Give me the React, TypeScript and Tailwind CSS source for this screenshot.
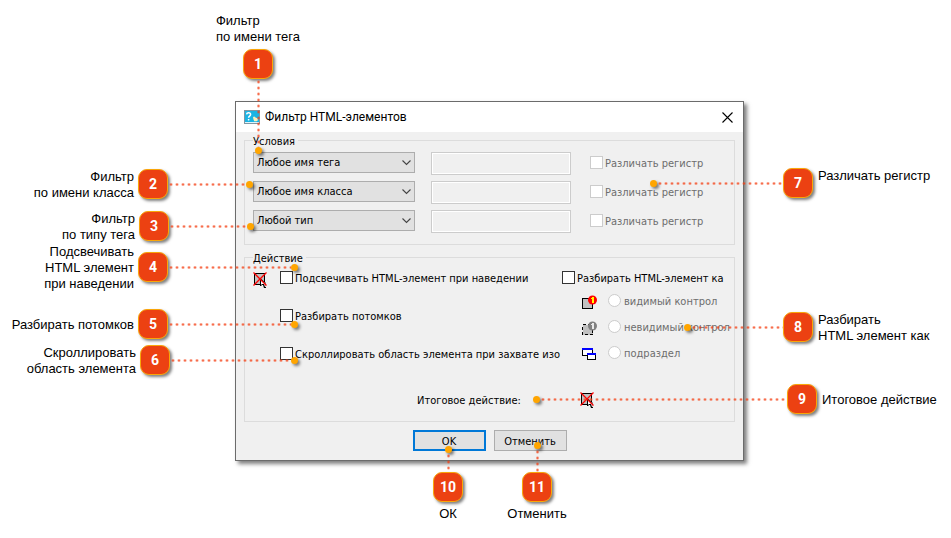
import React, { ReactNode, useId } from "react";
import { clsx } from "clsx";

const dialogFont = "font-['DejaVu_Sans_Condensed','DejaVu_Sans',sans-serif] text-[11px]";

function CrossedElementIcon() {
  return (
    <svg width="15" height="16" viewBox="0 0 15 16" className="shrink-0" aria-hidden="true">
      <rect x="1.5" y="1.5" width="10" height="11" fill="#c0c0c0" stroke="#000" shapeRendering="crispEdges" />
      <path d="M7 6v8l1 0 1-1 1 0 1 3 2 0 0-2-1-1 0-1 1-1z" fill="#000" />
      <path d="M8 8v5l1-1 2 0 1 3 1 0-1-3 0-1z" fill="#fff" />
      <path d="M.5.5l13 13M13.5.5l-13 13" stroke="#f00" strokeWidth="1.3" fill="none" />
    </svg>
  );
}

function ControlIcon({ hidden }: { hidden?: boolean }) {
  return (
    <svg width="15" height="15" viewBox="0 0 15 15" className="mt-[3px] shrink-0" aria-hidden="true">
      <rect
        x="0.5"
        y="3.5"
        width="10"
        height="10"
        fill="#c0c0c0"
        stroke="#000"
        strokeDasharray={hidden ? "3 2" : undefined}
        shapeRendering="crispEdges"
      />
      <circle cx="10.5" cy="5" r="4.5" fill={hidden ? "#808080" : "#f00"} />
      <g shapeRendering="crispEdges" fill={hidden ? "#e8e8e8" : "#ff0"}>
        <rect x="10" y="2" width="2" height="6" />
        <rect x="9" y="3" width="1" height="1" />
      </g>
    </svg>
  );
}

function WindowsIcon() {
  return (
    <svg width="15" height="15" viewBox="0 0 15 15" className="mt-[2px] shrink-0" aria-hidden="true">
      <g shapeRendering="crispEdges">
        <rect x="0.5" y="2.5" width="10" height="7" fill="#fff" stroke="#000" />
        <path d="M0 3h11" stroke="#00f" strokeWidth="2" />
        <rect x="5.5" y="7.5" width="8" height="6" fill="#fff" stroke="#000" />
        <path d="M5 8h9" stroke="#00f" strokeWidth="2" />
      </g>
    </svg>
  );
}

function AppIcon() {
  return (
    <svg width="16" height="16" viewBox="0 0 16 16" className="shrink-0" aria-hidden="true">
      <rect x="0.5" y="1.5" width="15" height="13" fill="#1bb4e4" stroke="#7f97a3" />
      <rect x="1" y="13" width="14" height="1" fill="#dff3fa" />
      <path
        d="M2.600 5.400c.2-2.200 4-2.200 4 .100 0 1.600-2 1.500-2 3.200M4.600 10v1.600"
        stroke="#fff"
        strokeWidth="1.500"
        fill="none"
      />
      <path d="M9 8l1.300-.6 1.200 1.200 2.200.8.2 1.800-1.300 1.100h-2.400l-.8-2z" fill="#fff0b8" />
    </svg>
  );
}

function Check({ label, disabled }: { label: string; disabled?: boolean }) {
  const id = useId();
  return (
    <div className="flex items-center gap-[2px]">
      <input
        id={id}
        type="checkbox"
        disabled={disabled}
        className="size-[13px] shrink-0 appearance-none border border-[#333] bg-white checked:bg-[#0078d7] disabled:border-[#ccc]"
      />
      <label
        htmlFor={id}
        className={clsx("pt-[2px] leading-[13px] whitespace-nowrap", disabled && "text-[#6d6d6d]")}
      >
        {label}
      </label>
    </div>
  );
}

function Radio({ label, icon }: { label: string; icon: ReactNode }) {
  const id = useId();
  return (
    <div className="flex h-[15px] items-center pl-5">
      {icon}
      <input
        id={id}
        type="radio"
        name="parse-as"
        disabled
        className="ml-[11px] size-[13px] shrink-0 appearance-none rounded-full border border-[#ccc] bg-white"
      />
      <label htmlFor={id} className="ml-[3px] pt-[2px] leading-[13px] whitespace-nowrap text-[#6d6d6d]">
        {label}
      </label>
    </div>
  );
}

function ConditionRow({ value }: { value: string }) {
  return (
    <div className="flex items-start">
      <div className="relative w-[162px]">
        <select
          aria-label={value}
          className="h-[21px] w-full appearance-none border border-[#adadad] bg-[#e1e1e1] pt-[2px] pl-[3px] text-black"
        >
          <option>{value}</option>
        </select>
        <svg width="9" height="6" viewBox="0 0 9 6" className="pointer-events-none absolute top-2 right-1" aria-hidden="true">
          <path d="M.5.5l4 4 4-4" fill="none" stroke="#444" strokeWidth="1.1" />
        </svg>
      </div>
      <input
        type="text"
        disabled
        aria-label={value}
        className="ml-4 h-[23px] w-[140px] border border-[#ccc] bg-[#f0f0f0] inset-ring inset-ring-white"
      />
      <div className="ml-[19px] flex h-[21px] items-center">
        <Check label="Различать регистр" disabled />
      </div>
    </div>
  );
}

function Dialog() {
  return (
    <section
      aria-label="Фильтр HTML-элементов"
      className={clsx("border border-[#6b6b6b] bg-[#f0f0f0] text-black shadow-[3px_3px_4px_rgba(0,0,0,0.5)]", dialogFont)}
    >
      <header className="flex h-[30px] items-center bg-white px-2">
        <AppIcon />
        <h1 className="ml-[5px] flex-1 font-['Roboto',sans-serif] text-[12px]">Фильтр HTML-элементов</h1>
        <button type="button" aria-label="Закрыть" className="p-[2px]">
          <svg width="11" height="11" viewBox="0 0 11 11" aria-hidden="true">
            <path d="M.5.5l10 10M10.500.5l-10 10" stroke="#000" strokeWidth="1.100" />
          </svg>
        </button>
      </header>
      <form className="px-2 pt-[1px] pb-[9px]">
        <fieldset className="min-w-0 border border-[#dcdcdc] px-2 pb-[11px]">
          <legend className="pt-[2px] pr-[3px] leading-[13px]">Условия</legend>
          <div className="flex flex-col gap-[6px] pt-1">
            <ConditionRow value="Любое имя тега" />
            <ConditionRow value="Любое имя класса" />
            <ConditionRow value="Любой тип" />
          </div>
        </fieldset>
        <fieldset className="mt-[5px] min-w-0 border border-[#dcdcdc] px-2 pb-[13px]">
          <legend className="pt-[2px] pr-[3px] leading-[13px]">Действие</legend>
          <div className="flex pt-[5px]">
            <div className="w-[27px] shrink-0 pt-[2px]">
              <CrossedElementIcon />
            </div>
            <div className="flex w-[282px] shrink-0 flex-col gap-[23px]">
              <Check label="Подсвечивать HTML-элемент при наведении" />
              <Check label="Разбирать потомков" />
              <Check label="Скроллировать область элемента при захвате изо" />
            </div>
            <div className="flex min-w-0 flex-1 flex-col gap-[11px]">
              <div className="-mb-[3px]">
                <Check label="Разбирать HTML-элемент ка" />
              </div>
              <Radio label="видимый контрол" icon={<ControlIcon />} />
              <Radio label="невидимый контрол" icon={<ControlIcon hidden />} />
              <Radio label="подраздел" icon={<WindowsIcon />} />
            </div>
          </div>
          <div className="mt-[31px] flex h-4 items-center pl-[164px]">
            <span className="w-[163px] pt-[2px]">Итоговое действие:</span>
            <CrossedElementIcon />
          </div>
        </fieldset>
        <div className="mt-2 flex justify-center gap-2">
          <button type="button" className="h-[21px] w-[73px] border-2 border-[#0078d7] bg-[#e1e1e1] pt-[2px] leading-[15px]">
            OK
          </button>
          <button type="button" className="h-[21px] w-[73px] border border-[#adadad] bg-[#e1e1e1] pt-[2px] leading-[15px]">
            Отменить
          </button>
        </div>
      </form>
    </section>
  );
}

type Side = "left" | "right" | "top" | "bottom";

const calloutLayout: Record<Side, string> = {
  left: "flex-row h-12",
  right: "flex-row-reverse h-12",
  top: "flex-col w-[120px]",
  bottom: "flex-col-reverse w-[120px]",
};

const captionLayout: Record<Side, string> = {
  left: "mr-1 pt-[1px] text-right",
  right: "ml-[5px] pt-[1px]",
  top: "mb-1 pt-[1px]",
  bottom: "mt-1",
};

interface CalloutProps {
  number: number;
  side: Side;
  place: string;
  captionSize?: string;
  lines: string[];
}

function Callout({ number, side, place, captionSize, lines }: CalloutProps) {
  const horizontal = side === "left" || side === "right";
  return (
    <div className={clsx("pointer-events-none absolute flex items-center", calloutLayout[side], place)}>
      <p className={clsx("shrink-0 leading-4 whitespace-nowrap", captionLayout[side], captionSize)}>
        {lines.map((line) => (
          <span key={line} className="block">
            {line}
          </span>
        ))}
      </p>
      <span className="flex size-[30px] shrink-0 items-center justify-center rounded-[9px] border border-[#f9a60a] bg-[#ec4112] font-['Roboto',sans-serif] text-[14px] font-bold text-white shadow-[2px_2px_3px_rgba(0,0,0,0.5)]">
        {number}
      </span>
      <span
        className={clsx(
          "flex-1 bg-[radial-gradient(circle,#f43e12,transparent_2px)]",
          horizontal ? "h-[3px] bg-[length:6px_3px]" : "w-[3px] bg-[length:3px_6px]",
        )}
      />
      <span className="size-[7px] shrink-0 rounded-full bg-[#ffa500] shadow-[2px_2px_3px_rgba(0,0,0,0.5)]" />
    </div>
  );
}

const callouts: CalloutProps[] = [
  { number: 1, side: "top", place: "left-[198px] top-3 h-[142px]", lines: ["Фильтр", "по имени тега"] },
  { number: 2, side: "left", place: "left-0 top-[160px] w-[253px]", captionSize: "w-[134px]", lines: ["Фильтр", "по имени класса"] },
  { number: 3, side: "left", place: "left-0 top-[202px] w-[254px]", captionSize: "w-[135px]", lines: ["Фильтр", "по типу тега"] },
  { number: 4, side: "left", place: "left-0 top-[243px] w-[298px]", captionSize: "w-[134px]", lines: ["Подсвечивать", "HTML элемент", "при наведении"] },
  { number: 5, side: "left", place: "left-0 top-[300px] w-[298px]", captionSize: "w-[134px]", lines: ["Разбирать потомков"] },
  { number: 6, side: "left", place: "left-0 top-[336px] w-[298px]", captionSize: "w-[136px]", lines: ["Скроллировать", "область элемента"] },
  { number: 7, side: "right", place: "right-0 top-[159px] w-[301px]", captionSize: "w-[133px] h-8", lines: ["Различать регистр"] },
  { number: 8, side: "right", place: "right-0 top-[303px] w-[267px]", captionSize: "w-[133px]", lines: ["Разбирать", "HTML элемент как"] },
  { number: 9, side: "right", place: "right-0 top-[375px] w-[418px]", captionSize: "w-[129px]", lines: ["Итоговое действие"] },
  { number: 10, side: "bottom", place: "left-[388px] top-[446px] h-[76px]", lines: ["ОК"] },
  { number: 11, side: "bottom", place: "left-[477px] top-[442px] h-[80px]", lines: ["Отменить"] },
];

export default function App() {
  return (
    <main className="min-h-screen bg-white font-['Liberation_Sans',Arial,sans-serif] text-[13px] text-black">
      <div className="relative mx-auto max-w-[951px] pt-[101px] pr-[207px] pb-[77px] pl-[235px]">
        <Dialog />
        {callouts.map((callout) => (
          <Callout key={callout.number} {...callout} />
        ))}
      </div>
    </main>
  );
}
